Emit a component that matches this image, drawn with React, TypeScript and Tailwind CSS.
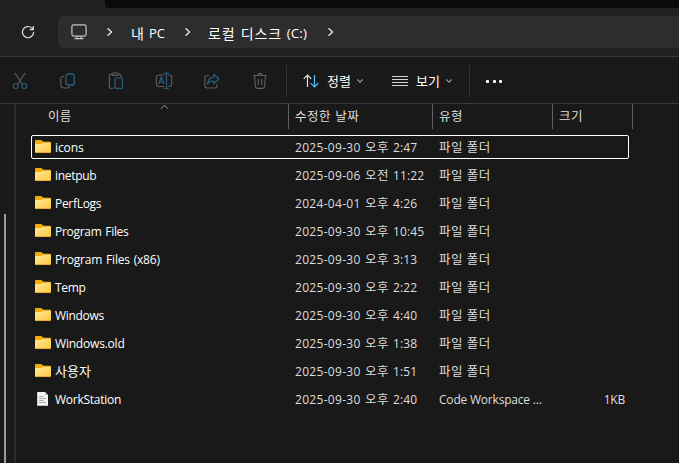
import React from "react";

const latin = "font-['Open_Sans','Noto_Sans_CJK_KR',sans-serif]";
const hangul = "font-['Noto_Sans_CJK_KR',sans-serif]";

type File = { name: string; date: string; half: string; time: string; kind: "folder" | "file"; tracking: string };

const files: File[] = [
  { name: "icons", date: "2025-09-30", half: "오후", time: "2:47", kind: "folder", tracking: "tracking-[-0.1px]" },
  { name: "inetpub", date: "2025-09-06", half: "오전", time: "11:22", kind: "folder", tracking: "tracking-[-0.3px]" },
  { name: "PerfLogs", date: "2024-04-01", half: "오후", time: "4:26", kind: "folder", tracking: "tracking-[-0.3px]" },
  { name: "Program Files", date: "2025-09-30", half: "오후", time: "10:45", kind: "folder", tracking: "tracking-[-0.3px] [word-spacing:1px]" },
  { name: "Program Files (x86)", date: "2025-09-30", half: "오후", time: "3:13", kind: "folder", tracking: "tracking-[-0.2px] [word-spacing:1px]" },
  { name: "Temp", date: "2025-09-30", half: "오후", time: "2:22", kind: "folder", tracking: "tracking-[-0.3px]" },
  { name: "Windows", date: "2025-09-30", half: "오후", time: "4:40", kind: "folder", tracking: "tracking-[-0.3px]" },
  { name: "Windows.old", date: "2025-09-30", half: "오후", time: "1:38", kind: "folder", tracking: "tracking-[-0.2px]" },
  { name: "사용자", date: "2025-09-30", half: "오후", time: "1:51", kind: "folder", tracking: "tracking-[0px]" },
  { name: "WorkStation", date: "2025-09-30", half: "오후", time: "2:40", kind: "file", tracking: "tracking-[-0.25px]" },
];

function FolderIcon() {
  return (
    <svg width="16" height="14" viewBox="0 0 16 14" className="shrink-0">
      <defs>
        <linearGradient id="front" x1="0" y1="0" x2="1" y2="1">
          <stop offset="0" stopColor="#ffe9a0" />
          <stop offset="1" stopColor="#ffc83a" />
        </linearGradient>
      </defs>
      <path d="M0 1.3C0 .5.5 0 1.3 0H5.6C6.2 0 6.6.2 7 .6L8.2 1.7H14.7C15.5 1.7 16 2.2 16 3V7H0Z" fill="#f5ad0c" />
      <path d="M0 5.1C0 4.3.5 3.9 1.3 3.9H5.8C6.3 3.9 6.7 3.7 7 3.4L7.7 2.8H14.8C15.5 2.8 16 3.2 16 4V11.8C16 12.6 15.5 13 14.7 13H1.3C.5 13 0 12.6 0 11.8Z" fill="url(#front)" />
      <path d="M.2 12.2C.5 12.8.9 13 1.4 13H14.6C15.1 13 15.6 12.8 15.8 12.2Z" fill="#df9e23" />
    </svg>
  );
}

function DocIcon() {
  return (
    <svg width="16" height="14" viewBox="0 0 16 14" className="shrink-0">
      <path d="M2.2 0H10L13 3V14H2.2Z" fill="#f4f4f4" />
      <path d="M10 0V3H13Z" fill="#b9b9b9" />
      <path d="M4 4.5H8.5M4 6.5H11M4 8.5H8.5M4 10.5H11" stroke="#a3a8ac" strokeWidth="1" />
      <path d="M2.2 13.5H13" stroke="#bcbcbc" />
    </svg>
  );
}

function Chevron() {
  return (
    <svg width="8" height="10" viewBox="0 0 8 10" fill="none" stroke="#e5e5e5" strokeWidth="1.4" className="shrink-0">
      <path d="M1.5 1.2L5.5 5L1.5 8.8" />
    </svg>
  );
}

function Caret() {
  return (
    <svg width="8" height="6" viewBox="0 0 8 6" fill="none" stroke="#9a9a9a" strokeWidth="1.2" className="shrink-0">
      <path d="M1.2 1.3L4 4.1L6.8 1.3" />
    </svg>
  );
}

function Tool({ children }: { children: React.ReactNode }) {
  return (
    <button className="flex w-12 items-center justify-center">
      <svg width="18" height="18" viewBox="0 0 18 18" fill="none" stroke="#606060" strokeWidth="1.1">
        {children}
      </svg>
    </button>
  );
}

const blue = "#28617f";

export default function App() {
  return (
    <div className={`flex h-[463px] w-[679px] flex-col overflow-hidden bg-[#191919] text-[12px] leading-4 text-white ${latin}`}>
      <div className="flex h-2 shrink-0 bg-[#202020] pl-[105px]">
        <div className="h-2 flex-1 rounded-bl-[4px] bg-[#0a0a0a]" />
      </div>

      <nav className="flex h-[49px] shrink-0 items-start border-b border-[#3b3b3b] bg-[#202020] pt-2">
        <button className="flex h-8 w-[58px] items-center pl-[21px]">
          <svg width="14" height="14" viewBox="0 0 14 14" fill="none" stroke="#dedede" strokeWidth="1.2">
            <path d="M12.6 7A5.6 5.6 0 1 1 10.9 3.1L12 4.2M12.3 1V4.6H8.7" />
          </svg>
        </button>
        <div className="flex h-8 flex-1 items-center rounded-l-[5px] bg-[#2d2d2d] pl-[13px]">
          <svg width="16" height="16" viewBox="0 0 16 16" fill="none" stroke="#c8c8c8" strokeWidth="1.2" className="shrink-0">
            <rect x=".9" y=".9" width="14.2" height="11.2" rx="1.8" />
            <path d="M6 12.3V14.5M10 12.3V14.5M3.5 14.7H12.5" />
          </svg>
          <span className="ml-[19px] flex"><Chevron /></span>
          <span className="ml-[17px] flex w-9 gap-[5px] whitespace-nowrap pt-px text-[13px]">
            <span className={`${hangul} text-[14px]`}>내</span>
            <span>PC</span>
          </span>
          <span className="ml-[17px] flex"><Chevron /></span>
          <span className="ml-4 flex w-[103px] gap-[5px] whitespace-nowrap pt-px text-[13px]">
            <span className={`${hangul} text-[14px] tracking-[0.8px] [word-spacing:1.5px]`}>로컬 디스크</span>
            <span className="text-[13.5px]">(C:)</span>
          </span>
          <span className="ml-4 flex"><Chevron /></span>
        </div>
      </nav>

      <div className="flex h-[47px] shrink-0 items-center border-b border-[#3b3b3b] pt-px">
        <div className="-ml-1 flex w-[290px] shrink-0 pt-px">
          <Tool>
            <path d="M4 1L11.5 12.5M14 1L6.5 12.5" />
            <circle cx="4.7" cy="14" r="2.5" stroke={blue} />
            <circle cx="13.3" cy="14" r="2.5" stroke={blue} />
          </Tool>
          <Tool>
            <path d="M5 4.5H4.2C2.8 4.5 1.8 5.3 1.8 6.7V12.5C1.8 15 3 16 5.3 16H8C9.3 16 10.2 15.5 10.5 14.5" />
            <rect x="7" y="2" width="8.3" height="11" rx="2" stroke={blue} strokeWidth="1.3" />
          </Tool>
          <Tool>
            <path d="M5 2.5H3.5C2.7 2.5 2.3 3 2.3 3.7V15C2.3 15.8 2.8 16.3 3.5 16.3H7M11.5 2.5H12.8C13.5 2.5 14 3 14 3.7V5" />
            <rect x="5" y="1" width="6.5" height="2.4" rx="1.1" />
            <rect x="8" y="6" width="7.5" height="10.4" rx="1.3" stroke={blue} strokeWidth="1.2" />
          </Tool>
          <Tool>
            <path d="M9.5 3H4C2.3 3 1.3 4 1.3 5.5V12C1.3 13.7 2.3 14.5 4 14.5H9.5M13.5 3H14C15.7 3 16.7 4 16.7 5.5V12C16.7 13.7 15.7 14.5 14 14.5H13.5" />
            <path d="M3.6 12L6.4 5.4L9.2 12M4.6 10H8.2M11.5 1.5V16.3M9.2 1.2H13.8M9.2 16.5H13.8" stroke={blue} strokeWidth="1.2" />
          </Tool>
          <Tool>
            <path d="M6 3.5H4.6C2.8 3.5 1.8 4.5 1.8 6V13.5C1.8 15.2 2.8 16 4.5 16H11.5C13.2 16 14 15.2 14 13.5V12.3" />
            <path d="M10.8 2.3L16 7L10.8 11.5V9C8 8.8 6 9.8 4.5 12C4.8 7.8 7 5.3 10.8 4.8Z" stroke={blue} strokeWidth="1.2" strokeLinejoin="round" />
          </Tool>
          <Tool>
            <path d="M2 3.5H16M6.9 3.5C6.9.7 11.1.7 11.1 3.5M3.5 3.5L4.6 14.8C4.7 15.9 5.2 16.4 6.2 16.4H11.8C12.8 16.4 13.3 15.9 13.4 14.8L14.5 3.5M7.3 7V12.7M10.7 7V12.7" />
          </Tool>
        </div>
        <div className="h-8 w-px shrink-0 bg-[#333333]" />
        <button className="ml-4 flex w-[62px] shrink-0 items-center pt-px">
          <svg width="16" height="14" viewBox="0 0 16 14" fill="none" strokeWidth="1.2" className="shrink-0">
            <path d="M4.5 13V1M.7 4.8L4.5 1L8.3 4.8" stroke="#dedede" />
            <path d="M11.5 1V13M7.7 9.2L11.5 13L15.3 9.2" stroke="#4cc2ff" />
          </svg>
          <span className={`ml-2 w-7 whitespace-nowrap text-left text-[13px] ${hangul}`}>정렬</span>
          <span className="ml-[1px] flex"><Caret /></span>
        </button>
        <button className="ml-[27px] flex w-[62px] shrink-0 items-center pt-px">
          <svg width="16" height="12" viewBox="0 0 16 12" stroke="#d5d5d5" className="shrink-0">
            <path d="M0 1.5H16M0 4.5H16M0 7.5H16M0 10.5H16" />
          </svg>
          <span className={`ml-2 w-7 whitespace-nowrap text-left text-[13px] ${hangul}`}>보기</span>
          <span className="ml-[1px] flex"><Caret /></span>
        </button>
        <div className="ml-[15px] h-8 w-px shrink-0 bg-[#333333]" />
        <button className="ml-4 flex gap-[3.5px] pt-px">
          <i className="size-[3px] rounded-[1px] bg-white" />
          <i className="size-[3px] rounded-[1px] bg-white" />
          <i className="size-[3px] rounded-[1px] bg-white" />
        </button>
      </div>

      <main className="flex min-h-0 flex-1">
        <aside className="flex w-4 shrink-0 border-r-2 border-[#2b2b2b] pl-1 pt-[110px]">
          <div className="w-[2px] bg-[#9a9a9a]" />
        </aside>
        <section className="flex-1">
          <header className={`flex h-[25px] text-[12.5px] text-[#dedede] ${hangul}`}>
            <div className="flex w-[273px] border-r border-[#636363] pl-8 pt-[4px]">
              <span className="w-[112px] tracking-[0.3px]">이름</span>
              <svg width="9" height="6" viewBox="0 0 9 6" fill="none" stroke="#9c9c9c" className="-mt-[4px]">
                <path d="M1 4.7L4.5 1.2L8 4.7" />
              </svg>
            </div>
            <div className="w-36 border-r border-[#636363] pl-[6px] pt-[4px] tracking-[0.5px] [word-spacing:1px]">수정한 날짜</div>
            <div className="w-[120px] border-r border-[#636363] pl-[6px] pt-[4px] tracking-[0.5px]">유형</div>
            <div className="w-20 border-r border-[#636363] pl-[6px] pt-[4px] tracking-[0.5px]">크기</div>
          </header>
          <div className="flex flex-col gap-1 pl-[15px] pt-[6px]">
            {files.map((f, i) => (
              <div
                key={f.name}
                className={`flex h-6 w-[598px] items-center rounded-[2px] border pl-[3px] ${i === 0 ? "border-white" : "border-transparent"}`}
              >
                {f.kind === "folder" ? <FolderIcon /> : <DocIcon />}
                <span className={`ml-1 w-60 whitespace-nowrap ${f.tracking} ${f.name === "사용자" ? `${hangul} text-[13px]` : "pt-[2px]"}`}>{f.name}</span>
                <span className="flex w-36 items-center whitespace-nowrap text-[#dedede]">
                  <span className="w-[70px] pt-[2px] tracking-[0.3px]">{f.date}</span>
                  <span className={`w-7 text-[12.5px] tracking-[0.4px] ${hangul}`}>{f.half}</span>
                  <span className="pt-[2px] tracking-[0.1px]">{f.time}</span>
                </span>
                <span className="w-[120px] whitespace-nowrap text-[#dedede]">
                  {f.kind === "folder" ? (
                    <span className={`text-[12.5px] tracking-[0.5px] [word-spacing:0.5px] ${hangul}`}>파일 폴더</span>
                  ) : (
                    <span className="block pt-[2px] tracking-[-0.2px]">Code Workspace ...</span>
                  )}
                </span>
                {f.kind === "file" && <span className="w-[66px] pt-[2px] text-right tracking-[-0.2px] text-[#dedede]">1KB</span>}
              </div>
            ))}
          </div>
        </section>
      </main>
    </div>
  );
}
